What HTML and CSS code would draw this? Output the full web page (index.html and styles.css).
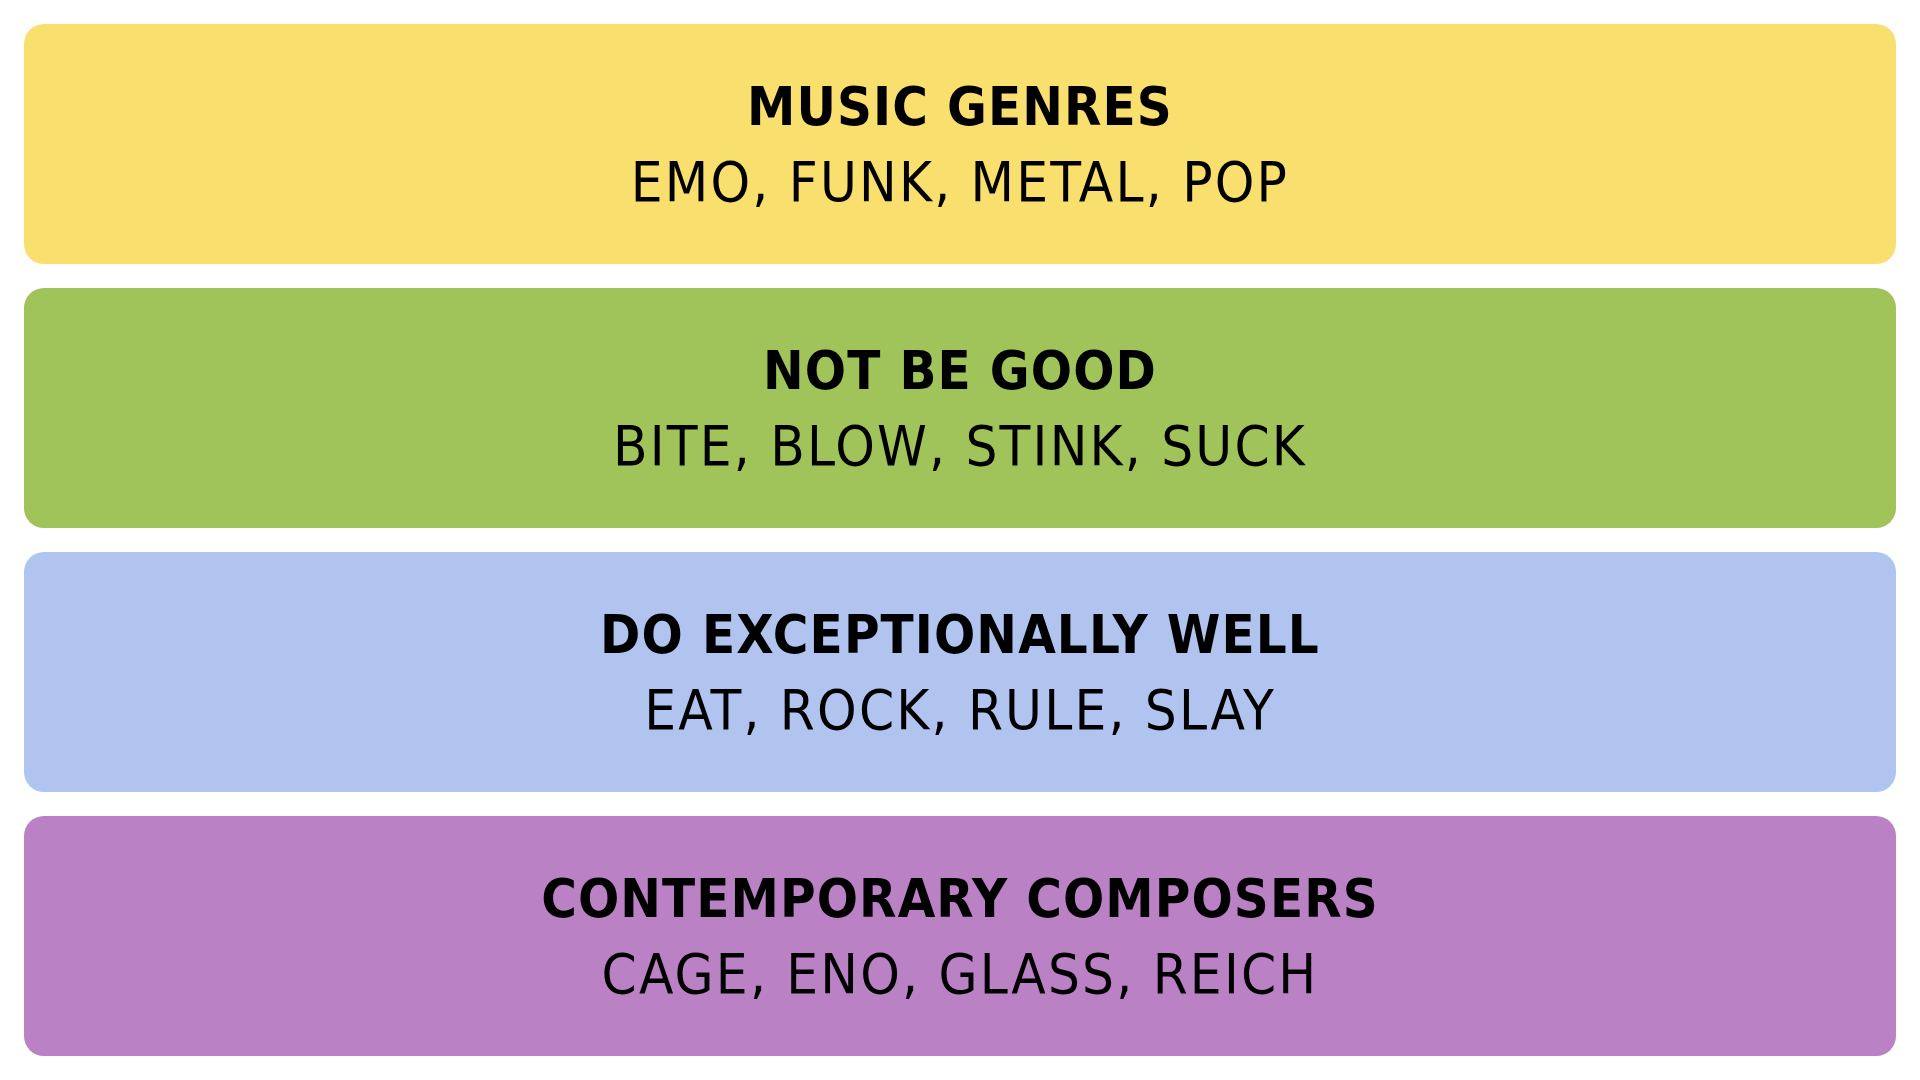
FILE: index.html
```html
<!DOCTYPE html>
<html>
<head>
<meta charset="utf-8">
<link rel="stylesheet" href="styles.css">
</head>
<body>
<main class="board">
  <section class="group yellow">
    <h2 class="title">MUSIC GENRES</h2>
    <p class="words">EMO, FUNK, METAL, POP</p>
  </section>
  <section class="group green">
    <h2 class="title">NOT BE GOOD</h2>
    <p class="words">BITE, BLOW, STINK, SUCK</p>
  </section>
  <section class="group blue">
    <h2 class="title">DO EXCEPTIONALLY WELL</h2>
    <p class="words">EAT, ROCK, RULE, SLAY</p>
  </section>
  <section class="group purple">
    <h2 class="title">CONTEMPORARY COMPOSERS</h2>
    <p class="words">CAGE, ENO, GLASS, REICH</p>
  </section>
</main>
</body>
</html>
```

FILE: styles.css
```css
html, body {
  margin: 0;
  padding: 0;
  background: #ffffff;
}
.board {
  display: flex;
  flex-direction: column;
  gap: 24px;
  padding: 24px;
}
.group {
  box-sizing: border-box;
  height: 240px;
  border-radius: 20px;
  display: flex;
  flex-direction: column;
  align-items: center;
  justify-content: center;
  color: #000;
  font-family: "DejaVu Sans Condensed", "Liberation Sans", sans-serif;
}
.yellow { background: #f9df6d; }
.green { background: #a0c35a; }
.blue { background: #b0c4ef; }
.purple { background: #ba81c5; }
.title {
  margin: 0;
  font-size: 54px;
  font-weight: 700;
  line-height: 73px;
  letter-spacing: 1.1px;
}
.words {
  margin: 2px 0 0;
  font-size: 56px;
  font-weight: 400;
  line-height: 73px;
  letter-spacing: 2.2px;
}
```
